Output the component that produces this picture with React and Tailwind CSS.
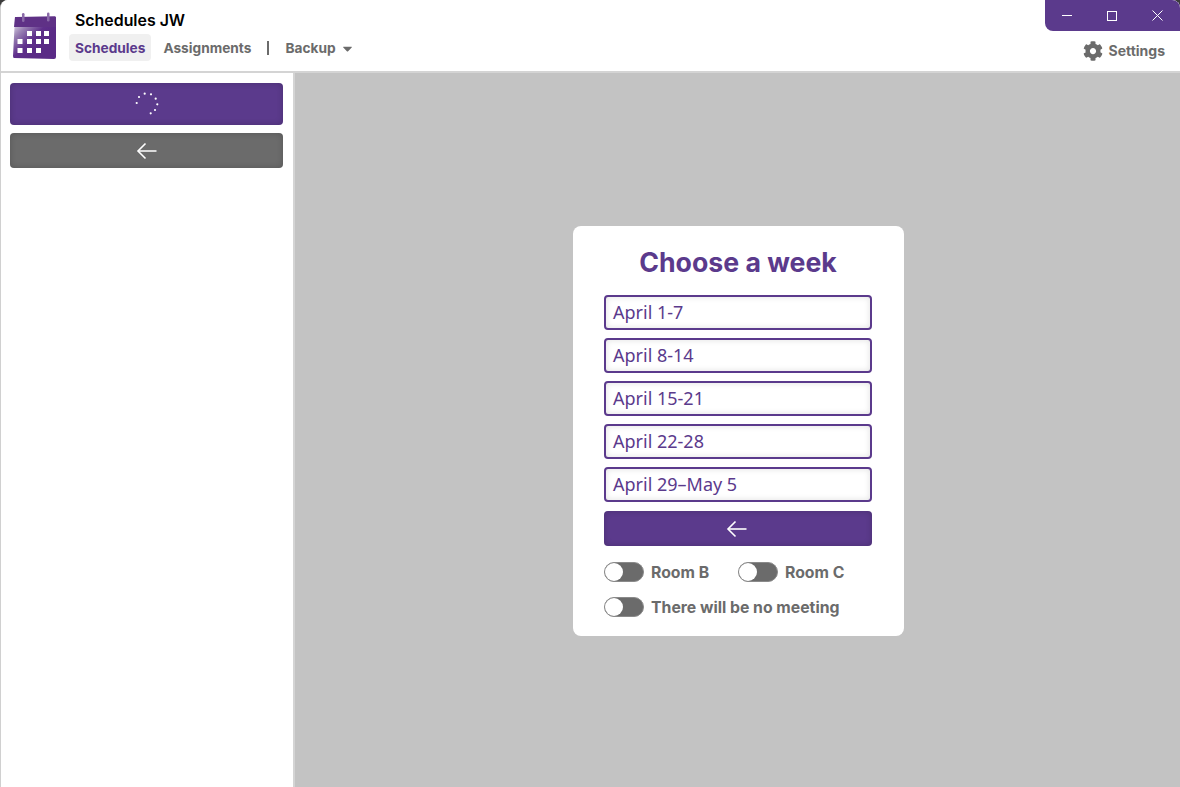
import React from "react";
import { FaCog, FaCaretDown } from "react-icons/fa";

const weeks = ["April 1-7", "April 8-14", "April 15-21", "April 22-28", "April 29–May 5"];

function Logo() {
  return (
    <svg width="46" height="48" viewBox="0 0 46 48" className="shrink-0">
      <defs>
        <linearGradient id="cal" x1="0" y1="0.2" x2="0.55" y2="0.75">
          <stop offset="0" stopColor="#d9d2e4" />
          <stop offset="0.3" stopColor="#9a82b4" />
          <stop offset="0.7" stopColor="#5f2f8b" />
          <stop offset="1" stopColor="#5a2a86" />
        </linearGradient>
      </defs>
      <path d="M3 5 L43 4.5 Q44 4.5 44 6 L44 45 Q44 47 42 47 L2 46 Q1 46 1 44 Z" fill="url(#cal)" />
      <path d="M3 5 L43 4.5 Q44 4.5 44 6 L44 15 L2 15 Z" fill="#5f3186" />
      <rect x="10" y="1" width="2.5" height="9" rx="1.25" fill="#8a6aa8" />
      <rect x="35" y="0.5" width="2.5" height="9" rx="1.25" fill="#8a6aa8" />
      {[15, 24, 32].map((x) => <rect key={x} x={x} y="19" width="5" height="5" fill="#fff" />)}
      {[5.5, 15, 24, 32].map((x) => <rect key={x} x={x} y="27" width="5" height="5" fill="#fff" />)}
      {[5.5, 15, 24].map((x) => <rect key={x} x={x} y="36" width="5" height="5" fill="#fff" />)}
    </svg>
  );
}

function Spinner() {
  const dots = [[9.7, 1.7], [16, 2.3], [20.7, 6.7], [22.3, 12.3], [20, 18], [15.7, 21.3], [1.7, 11], [4, 5]];
  return (
    <svg width="24" height="24" viewBox="0 0 24 24">
      {dots.map(([x, y]) => <circle key={x} cx={x} cy={y} r="1.1" fill="#fff" />)}
    </svg>
  );
}

function ArrowBack() {
  return (
    <svg width="22" height="18" viewBox="0 0 22 18" fill="none" stroke="#fff" strokeWidth="1.6">
      <path d="M20.5 9 H2" />
      <path d="M9.5 1.5 L2 9 L9.5 16.5" />
    </svg>
  );
}

function Toggle({ label, className }) {
  return (
    <div className={"h-5 flex items-center gap-[7px] " + (className || "")}>
      <div className="w-10 h-5 rounded-full bg-[#6b6b6b] border border-[#8a8a8a] flex items-center">
        <div className="w-[18px] h-[18px] rounded-full bg-white" />
      </div>
      <span className="pt-[2px] text-[15.8px] font-bold text-[#6b6b6b] leading-5">{label}</span>
    </div>
  );
}

export default function App() {
  return (
    <div className="w-[1180px] h-[787px] bg-[#3c3c3c] font-['Inter',sans-serif] overflow-hidden">
      <div className="h-full flex flex-col bg-white rounded-tl-lg rounded-tr-lg border-l border-[#d0d0d0] overflow-hidden">
        <header className="h-[73px] shrink-0 flex border-b-2 border-[#d4d4d4] bg-white">
          <div className="pl-[11px] pt-[12px]">
            <Logo />
          </div>
          <div className="pl-[11px] flex-1">
            <div className="pl-[6px] pt-[11px] text-[15.9px] font-semibold text-black leading-5">Schedules JW</div>
            <nav className="mt-[3px] flex items-center text-[13.7px] font-bold text-[#6b6b6b]">
              <span className="h-[27px] px-[6px] pt-[2px] flex items-center rounded bg-[#f0f0f0] text-[#5b3a8c]">Schedules</span>
              <span className="ml-[12px] pt-[2px]">Assignments</span>
              <span className="ml-[16px] w-[2px] h-[14px] bg-[#6b6b6b]" />
              <span className="ml-[16px] pt-[2px]">Backup</span>
              <FaCaretDown className="ml-[4px] mt-[2px] text-[15px]" />
            </nav>
          </div>
          <div className="w-[135px] flex flex-col items-end">
            <div className="w-[135px] h-[31px] bg-[#5b3a8c] rounded-bl-lg flex items-center text-white">
              <div className="w-[44px] flex justify-center">
                <div className="w-[10px] h-px bg-white" />
              </div>
              <div className="w-[46px] flex justify-center">
                <div className="w-[10px] h-[10px] border border-white" />
              </div>
              <div className="w-[45px] flex justify-center">
                <svg width="11" height="11" viewBox="0 0 11 11" stroke="#fff" strokeWidth="1">
                  <path d="M0.5 0.5 L10.5 10.5 M10.5 0.5 L0.5 10.5" />
                </svg>
              </div>
            </div>
            <div className="mt-[9px] mr-[15px] flex items-center gap-[6px] text-[#6b6b6b]">
              <FaCog className="text-[20px]" />
              <span className="text-[14px] font-bold">Settings</span>
            </div>
          </div>
        </header>
        <div className="flex-1 flex min-h-0">
          <aside className="w-[294px] shrink-0 bg-white border-r-2 border-[#d4d4d4] pl-[9px] pr-[10px] pt-[10px] flex flex-col gap-2">
            <button className="h-[42px] rounded bg-[#5b3a8c] shadow-[inset_0_0_6px_rgba(0,0,0,0.2)] flex items-center justify-center">
              <Spinner />
            </button>
            <button className="h-[35px] rounded bg-[#6b6b6b] shadow-[inset_0_0_6px_rgba(0,0,0,0.2)] flex items-center justify-center">
              <ArrowBack />
            </button>
          </aside>
          <main className="flex-1 bg-[#c3c3c3] flex items-center justify-center">
            <div className="w-[331px] h-[410px] bg-white rounded-lg pl-[31px] pr-[32px] ml-[2px] mt-[2px]">
              <h1 className="mt-[18px] h-[36px] leading-[36px] text-center text-[26.7px] font-bold text-[#5b3a8c]">Choose a week</h1>
              <div className="mt-[15px] flex flex-col gap-2">
                {weeks.map((w) => (
                  <button key={w} className="h-[35px] rounded border-2 border-[#5b3a8c] bg-white shadow-[inset_0_0_6px_rgba(0,0,0,0.12)] px-[7px] text-left text-[18px] text-[#5b3a8c] font-['Noto_Sans',sans-serif]">
                    {w}
                  </button>
                ))}
                <button className="mt-px h-[35px] pr-[2px] rounded bg-[#5b3a8c] shadow-[inset_0_0_6px_rgba(0,0,0,0.2)] flex items-center justify-center">
                  <ArrowBack />
                </button>
              </div>
              <div className="mt-[16px] flex">
                <Toggle label="Room B" className="w-[134px]" />
                <Toggle label="Room C" />
              </div>
              <Toggle label="There will be no meeting" className="mt-[15px]" />
            </div>
          </main>
        </div>
      </div>
    </div>
  );
}
